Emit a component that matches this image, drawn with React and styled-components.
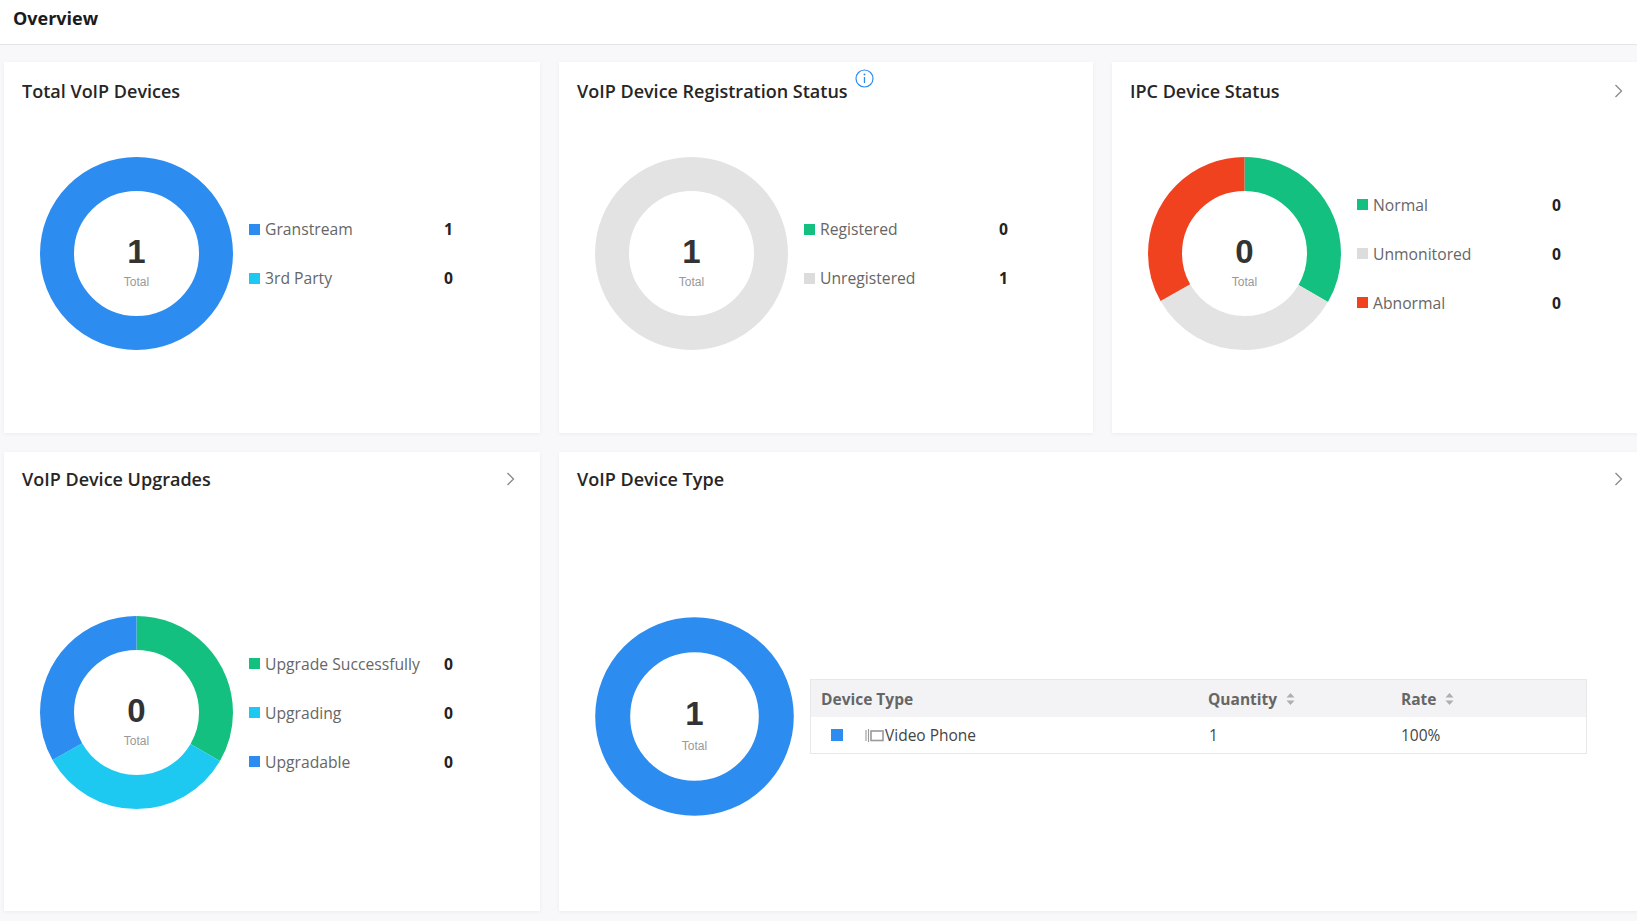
import React from 'react';
import styled, { createGlobalStyle } from 'styled-components';

const GlobalStyle = createGlobalStyle`
  html, body { margin: 0; padding: 0; }
  body {
    font-family: "Open Sans", "Noto Sans", sans-serif;
    background: #f8f8fa;
    overflow: hidden;
  }
  * { box-sizing: border-box; }
`;

const Page = styled.div`
  width: 1637px;
  height: 921px;
  overflow: hidden;
  background: #f8f8fa;
`;

const TopBar = styled.header`
  height: 45px;
  background: #fff;
  border-bottom: 1px solid #e5e5e8;
  padding: 7px 13px 0;
  font-size: 18px;
  font-weight: 700;
  line-height: 22px;
  color: #1b1b1b;
`;

const Grid = styled.main`
  display: grid;
  grid-template-columns: 536px 534px 536px;
  grid-template-rows: 371px 459px;
  column-gap: 19px;
  row-gap: 19px;
  padding: 17px 0 0 4px;
  width: max-content;
`;

const Card = styled.section`
  background: #fff;
  box-shadow: 0 1px 4px rgba(0, 0, 0, 0.05);
  display: flex;
  flex-direction: column;
  padding: ${(p) => p.$padTop ?? 18}px 25px 0 18px;
  grid-column: ${(p) => (p.$span ? `span ${p.$span}` : 'auto')};
`;

const CardHead = styled.div`
  display: flex;
  align-items: flex-start;
  height: 22px;
`;

const Title = styled.h2`
  margin: 0;
  font-size: 18px;
  font-weight: 600;
  line-height: 22px;
  color: #262626;
`;

const InfoIcon = styled.svg`
  margin: -11px 0 0 7px;
  flex: none;
`;

const Chevron = styled.svg`
  margin: 4px 0 0 auto;
  flex: none;
`;

const Body = styled.div`
  display: flex;
  align-items: center;
  margin-top: ${(p) => p.$top}px;
  padding-left: 17px;
`;

const Legend = styled.div`
  display: grid;
  grid-template-columns: 195px auto;
  row-gap: 27px;
  margin-left: 15px;
`;

const LegendLabel = styled.div`
  display: flex;
  align-items: center;
  gap: 5px;
  font-size: 15.7px;
  line-height: 22px;
  color: #666;
  white-space: nowrap;
`;

const Swatch = styled.span`
  width: ${(p) => p.$size || 11}px;
  height: ${(p) => p.$size || 11}px;
  background: ${(p) => p.$color};
  flex: none;
`;

const LegendValue = styled.div`
  font-size: 15.7px;
  font-weight: 700;
  line-height: 22px;
  color: #222;
`;

const Table = styled.div`
  width: 777px;
  margin-left: 15px;
  border: 1px solid #e8e8ea;
  background: #fff;
`;

const Row = styled.div`
  display: grid;
  grid-template-columns: 387px 193px 1fr;
  height: ${(p) => (p.$head ? 37 : 36)}px;
  align-items: center;
  background: ${(p) => (p.$head ? '#f3f3f5' : '#fff')};
`;

const HeadCell = styled.div`
  display: flex;
  align-items: center;
  gap: 9px;
  padding-left: 10px;
  font-size: 15.5px;
  font-weight: 700;
  color: #666;
`;

const Cell = styled.div`
  display: flex;
  align-items: center;
  padding-left: ${(p) => p.$pad ?? 11}px;
  font-size: 15.5px;
  color: #444;
  white-space: nowrap;
`;

const TypeIcon = styled.svg`
  margin-left: 22px;
  margin-right: 1px;
  flex: none;
`;

const C = {
  blue: '#2d8cf0',
  cyan: '#1ec9f1',
  green: '#14c07f',
  red: '#f0421f',
  gray: '#e3e3e3',
  graySw: '#dcdcdc',
};

function Donut({ total, segments, outer = 96.5, inner = 62.5, numDy = 9, totalDy = 32 }) {
  const size = Math.ceil(outer * 2) + 2;
  const c = size / 2;
  const r = (outer + inner) / 2;
  const w = outer - inner;
  const circ = 2 * Math.PI * r;
  let acc = 0;
  return (
    <svg width={size} height={size} viewBox={`0 0 ${size} ${size}`} style={{ flex: 'none' }}>
      {segments.map((s, i) => {
        const len = circ * s.frac;
        const el = (
          <circle
            key={i}
            cx={c}
            cy={c}
            r={r}
            fill="none"
            stroke={s.color}
            strokeWidth={w}
            strokeDasharray={`${len} ${circ - len}`}
            strokeDashoffset={-acc}
            transform={`rotate(-90 ${c} ${c})`}
          />
        );
        acc += len;
        return el;
      })}
      <text
        x={c}
        y={c + numDy}
        textAnchor="middle"
        fontFamily='"Liberation Sans", Arial, sans-serif'
        fontWeight="700"
        fontSize="33"
        fill="#333"
      >
        {total}
      </text>
      <text
        x={c}
        y={c + totalDy}
        textAnchor="middle"
        fontFamily='"Liberation Sans", Arial, sans-serif'
        fontSize="12"
        fill="#999"
      >
        Total
      </text>
    </svg>
  );
}

const ChevronIcon = () => (
  <Chevron width="9" height="14" viewBox="0 0 9 14">
    <path d="M1.5 1 L7.5 7 L1.5 13" fill="none" stroke="#8a8a8a" strokeWidth="1.3" />
  </Chevron>
);

function LegendList({ items }) {
  return (
    <Legend>
      {items.map((it) => (
        <React.Fragment key={it.label}>
          <LegendLabel>
            <Swatch $color={it.color} />
            {it.label}
          </LegendLabel>
          <LegendValue>{it.value}</LegendValue>
        </React.Fragment>
      ))}
    </Legend>
  );
}

const SortIcon = () => (
  <svg width="9" height="14" viewBox="0 0 9 14">
    <path d="M4.5 1 L8.5 5.5 L0.5 5.5 Z" fill="#aeaeb2" />
    <path d="M4.5 13 L8.5 8.5 L0.5 8.5 Z" fill="#aeaeb2" />
  </svg>
);

export default function App() {
  return (
    <Page>
      <GlobalStyle />
      <TopBar>Overview</TopBar>
      <Grid>
        <Card>
          <CardHead>
            <Title>Total VoIP Devices</Title>
          </CardHead>
          <Body $top={54}>
            <Donut total={1} segments={[{ color: C.blue, frac: 1 }]} />
            <LegendList
              items={[
                { label: 'Granstream', color: C.blue, value: 1 },
                { label: '3rd Party', color: C.cyan, value: 0 },
              ]}
            />
          </Body>
        </Card>

        <Card>
          <CardHead>
            <Title>VoIP Device Registration Status</Title>
            <InfoIcon width="19" height="19" viewBox="0 0 19 19">
              <circle cx="9.5" cy="9.5" r="8.5" fill="none" stroke={C.blue} strokeWidth="1.2" />
              <circle cx="9.5" cy="5.6" r="1" fill={C.blue} />
              <path d="M9.5 8 V14" stroke={C.blue} strokeWidth="1.3" />
            </InfoIcon>
          </CardHead>
          <Body $top={54}>
            <Donut total={1} segments={[{ color: C.gray, frac: 1 }]} />
            <LegendList
              items={[
                { label: 'Registered', color: C.green, value: 0 },
                { label: 'Unregistered', color: C.graySw, value: 1 },
              ]}
            />
          </Body>
        </Card>

        <Card>
          <CardHead>
            <Title>IPC Device Status</Title>
            <ChevronIcon />
          </CardHead>
          <Body $top={54}>
            <Donut
              total={0}
              segments={[
                { color: C.green, frac: 1 / 3 },
                { color: C.gray, frac: 1 / 3 },
                { color: C.red, frac: 1 / 3 },
              ]}
            />
            <LegendList
              items={[
                { label: 'Normal', color: C.green, value: 0 },
                { label: 'Unmonitored', color: C.graySw, value: 0 },
                { label: 'Abnormal', color: C.red, value: 0 },
              ]}
            />
          </Body>
        </Card>

        <Card $padTop={16}>
          <CardHead>
            <Title>VoIP Device Upgrades</Title>
            <ChevronIcon />
          </CardHead>
          <Body $top={125}>
            <Donut
              total={0}
              segments={[
                { color: C.green, frac: 1 / 3 },
                { color: C.cyan, frac: 1 / 3 },
                { color: C.blue, frac: 1 / 3 },
              ]}
            />
            <LegendList
              items={[
                { label: 'Upgrade Successfully', color: C.green, value: 0 },
                { label: 'Upgrading', color: C.cyan, value: 0 },
                { label: 'Upgradable', color: C.blue, value: 0 },
              ]}
            />
          </Body>
        </Card>

        <Card $span={2} $padTop={16}>
          <CardHead>
            <Title>VoIP Device Type</Title>
            <ChevronIcon />
          </CardHead>
          <Body $top={126}>
            <Donut
              total={1}
              outer={99.3}
              inner={64.3}
              numDy={8.5}
              totalDy={33}
              segments={[{ color: C.blue, frac: 1 }]}
            />
            <Table>
              <Row $head>
                <HeadCell>Device Type</HeadCell>
                <HeadCell>
                  Quantity <SortIcon />
                </HeadCell>
                <HeadCell>
                  Rate <SortIcon />
                </HeadCell>
              </Row>
              <Row>
                <Cell $pad={20}>
                  <Swatch $color={C.blue} $size={12} />
                  <TypeIcon width="19" height="16" viewBox="0 0 19 16">
                    <path d="M1 3 V14" stroke="#9a9a9a" strokeWidth="1.1" />
                    <path d="M3.5 2 V15" stroke="#9a9a9a" strokeWidth="1.1" />
                    <rect x="6" y="4" width="12" height="9.5" fill="none" stroke="#9a9a9a" strokeWidth="1.6" />
                  </TypeIcon>
                  Video Phone
                </Cell>
                <Cell>1</Cell>
                <Cell $pad={10}>100%</Cell>
              </Row>
            </Table>
          </Body>
        </Card>
      </Grid>
    </Page>
  );
}
